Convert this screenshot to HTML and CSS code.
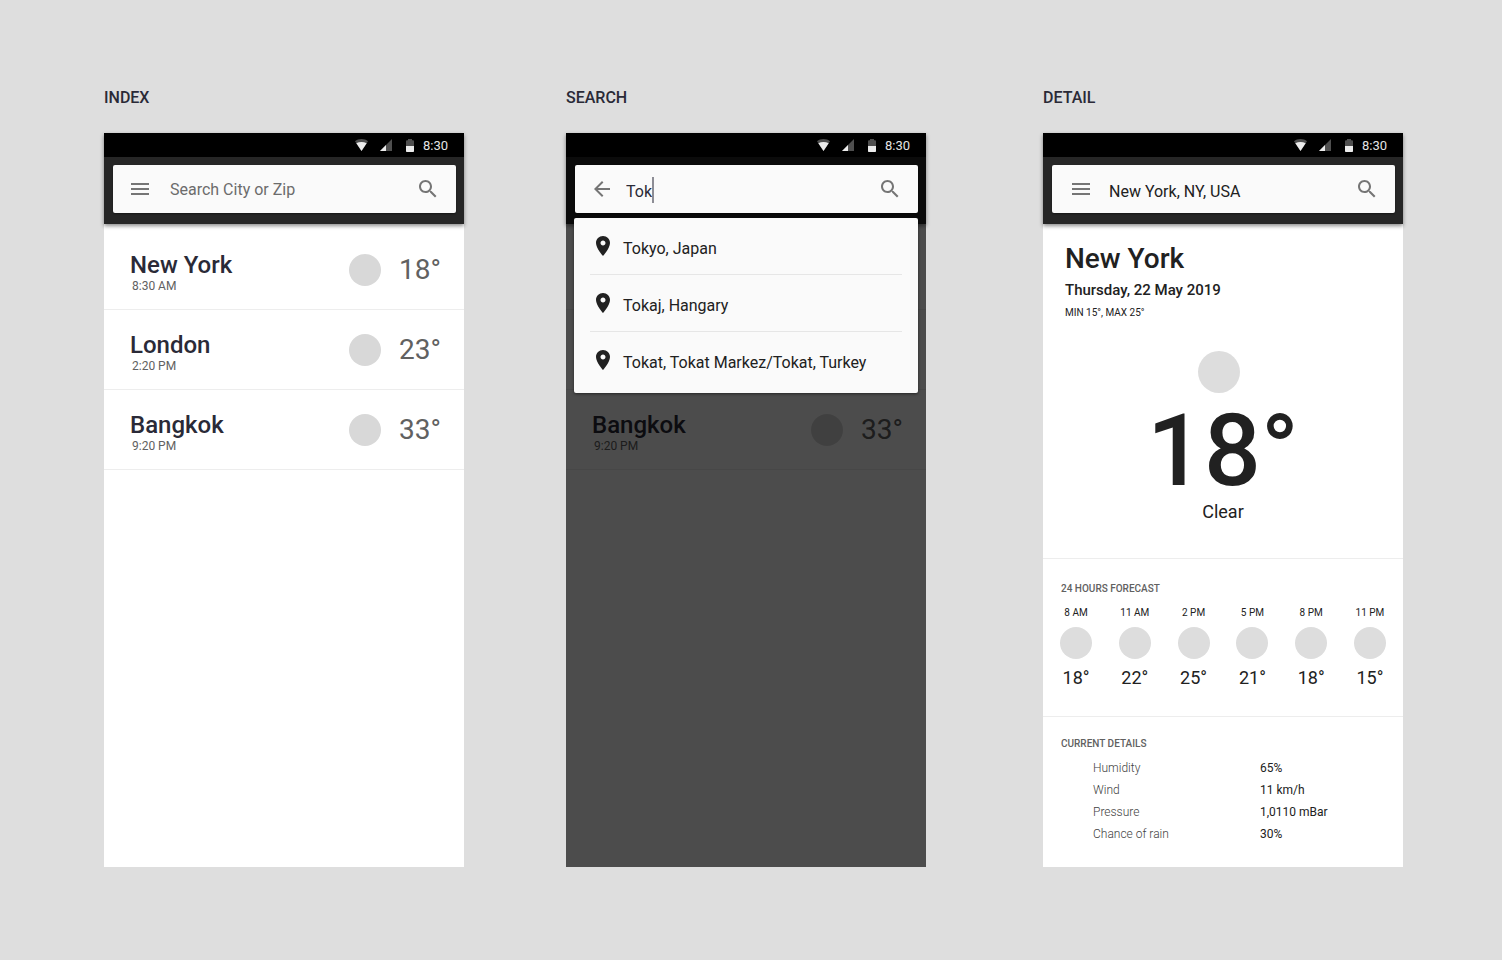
FILE: index.html
```html
<!DOCTYPE html>
<html lang="en">
<head>
<meta charset="utf-8">
<meta name="viewport" content="width=device-width, initial-scale=1">
<title>Weather</title>
<link rel="stylesheet" href="styles.css">
</head>
<body>
<svg class="sprite" width="0" height="0" aria-hidden="true">
  <symbol id="wifi" viewBox="0 0 13 12">
    <path fill="#4f4f4f" d="M6.500 0C4 0 1.700.900 0 2.300L6.500 12 13 2.300C11.300.900 9 0 6.500 0z"/>
    <path fill="#ececec" d="M6.500 3C4.600 3 2.900 3.400 1.300 4.200L6.500 12l5.200-7.800C10.100 3.400 8.400 3 6.500 3z"/>
  </symbol>
  <symbol id="signal" viewBox="0 0 12 12">
    <path fill="#4f4f4f" d="M0 12h12V0z"/>
    <path fill="#ececec" d="M0 12h6V6z"/>
  </symbol>
  <symbol id="battery" viewBox="0 0 8 13">
    <path fill="#4f4f4f" d="M0 7V2.200Q0 1.200 1 1.200h1V0h4v1.200h1q1 0 1 1V7z"/>
    <path fill="#ececec" d="M0 7h8v5.200q0 .8-.8.8H.8q-.8 0-.8-.8z"/>
  </symbol>
  <symbol id="menu" viewBox="0 0 24 24"><path d="M3 18h18v-2H3v2zm0-5h18v-2H3v2zm0-7v2h18V6H3z"/></symbol>
  <symbol id="back" viewBox="0 0 24 24"><path d="M20 11H7.830l5.590-5.590L12 4l-8 8 8 8 1.410-1.410L7.830 13H20v-2z"/></symbol>
  <symbol id="search" viewBox="0 0 24 24"><path d="M15.500 14h-.79l-.28-.27C15.410 12.590 16 11.110 16 9.500 16 5.910 13.090 3 9.500 3S3 5.910 3 9.500 5.910 16 9.500 16c1.610 0 3.090-.59 4.230-1.570l.27.28v.79l5 4.990L20.490 19l-4.990-5zm-6 0C7.010 14 5 11.990 5 9.500S7.010 5 9.500 5 14 7.010 14 9.500 11.990 14 9.500 14z"/></symbol>
  <symbol id="place" viewBox="0 0 24 24"><path d="M12 2C8.130 2 5 5.130 5 9c0 5.250 7 13 7 13s7-7.750 7-13c0-3.870-3.130-7-7-7zm0 9.500c-1.380 0-2.500-1.120-2.500-2.500s1.120-2.500 2.500-2.500 2.500 1.120 2.500 2.500-1.120 2.500-2.500 2.500z"/></symbol>
</svg>

<main class="board">
  <section class="screen">
    <h2 class="screen-title">INDEX</h2>
    <div class="phone">
      <header class="header">
        <div class="status">
          <svg class="wifi"><use href="#wifi"/></svg>
          <svg class="signal"><use href="#signal"/></svg>
          <svg class="battery"><use href="#battery"/></svg>
          <span class="clock">8:30</span>
        </div>
        <div class="appbar">
          <form class="searchbox">
            <button class="icon-button" type="button" aria-label="Menu"><svg class="icon"><use href="#menu"/></svg></button>
            <input class="query query-empty" type="text" placeholder="Search City or Zip" aria-label="Search City or Zip">
            <button class="icon-button" type="button" aria-label="Search"><svg class="icon"><use href="#search"/></svg></button>
          </form>
        </div>
      </header>
      <ul class="cities">
        <li><a class="city" href="#new-york">
          <div class="city-text"><div class="city-name">New York</div><div class="city-time">8:30 AM</div></div>
          <span class="dot"></span><span class="city-temp">18°</span></a></li>
        <li><a class="city" href="#london">
          <div class="city-text"><div class="city-name">London</div><div class="city-time">2:20 PM</div></div>
          <span class="dot"></span><span class="city-temp">23°</span></a></li>
        <li><a class="city" href="#bangkok">
          <div class="city-text"><div class="city-name">Bangkok</div><div class="city-time">9:20 PM</div></div>
          <span class="dot"></span><span class="city-temp">33°</span></a></li>
      </ul>
    </div>
  </section>

  <section class="screen">
    <h2 class="screen-title">SEARCH</h2>
    <div class="phone">
      <header class="header">
        <div class="status">
          <svg class="wifi"><use href="#wifi"/></svg>
          <svg class="signal"><use href="#signal"/></svg>
          <svg class="battery"><use href="#battery"/></svg>
          <span class="clock">8:30</span>
        </div>
        <div class="appbar">
          <form class="searchbox searchbox-active">
            <button class="icon-button" type="button" aria-label="Back"><svg class="icon"><use href="#back"/></svg></button>
            <span class="field">
              <input class="query query-typing" type="text" value="Tok" aria-label="Search city">
              <span class="caret"></span>
            </span>
            <button class="icon-button" type="button" aria-label="Search"><svg class="icon"><use href="#search"/></svg></button>
            <ul class="suggestions">
              <li><button class="suggestion" type="button"><svg class="icon"><use href="#place"/></svg><span>Tokyo, Japan</span></button></li>
              <li><button class="suggestion" type="button"><svg class="icon"><use href="#place"/></svg><span>Tokaj, Hangary</span></button></li>
              <li><button class="suggestion" type="button"><svg class="icon"><use href="#place"/></svg><span>Tokat, Tokat Markez/Tokat, Turkey</span></button></li>
            </ul>
          </form>
        </div>
      </header>
      <ul class="cities">
        <li><a class="city" href="#new-york">
          <div class="city-text"></div></a></li>
        <li><a class="city" href="#london">
          <div class="city-text"></div></a></li>
        <li><a class="city" href="#bangkok">
          <div class="city-text"><div class="city-name">Bangkok</div><div class="city-time">9:20 PM</div></div>
          <span class="dot"></span><span class="city-temp">33°</span></a></li>
      </ul>
      <div class="scrim"></div>
    </div>
  </section>

  <section class="screen screen-detail">
    <h2 class="screen-title">DETAIL</h2>
    <div class="phone">
      <header class="header">
        <div class="status">
          <svg class="wifi"><use href="#wifi"/></svg>
          <svg class="signal"><use href="#signal"/></svg>
          <svg class="battery"><use href="#battery"/></svg>
          <span class="clock">8:30</span>
        </div>
        <div class="appbar">
          <form class="searchbox searchbox-filled">
            <button class="icon-button" type="button" aria-label="Menu"><svg class="icon"><use href="#menu"/></svg></button>
            <input class="query" type="text" value="New York, NY, USA" aria-label="City">
            <button class="icon-button" type="button" aria-label="Search"><svg class="icon"><use href="#search"/></svg></button>
          </form>
        </div>
      </header>
      <section class="today">
        <h1 class="today-city">New York</h1>
        <p class="today-date">Thursday, 22 May 2019</p>
        <p class="today-range">MIN 15°, MAX 25°</p>
        <div class="now">
          <span class="dot dot-large"></span>
          <span class="now-temp">18°</span>
          <span class="now-sky">Clear</span>
        </div>
      </section>
      <section class="forecast">
        <h3 class="label">24 HOURS FORECAST</h3>
        <ol class="hours">
          <li class="hour"><span>8 AM</span><span class="dot dot-light"></span><span class="hour-temp">18°</span></li>
          <li class="hour"><span>11 AM</span><span class="dot dot-light"></span><span class="hour-temp">22°</span></li>
          <li class="hour"><span>2 PM</span><span class="dot dot-light"></span><span class="hour-temp">25°</span></li>
          <li class="hour"><span>5 PM</span><span class="dot dot-light"></span><span class="hour-temp">21°</span></li>
          <li class="hour"><span>8 PM</span><span class="dot dot-light"></span><span class="hour-temp">18°</span></li>
          <li class="hour"><span>11 PM</span><span class="dot dot-light"></span><span class="hour-temp">15°</span></li>
        </ol>
      </section>
      <section class="details">
        <h3 class="label">CURRENT DETAILS</h3>
        <div class="details-body">
          <table class="details-table">
            <tr><th scope="row">Humidity</th><td>65%</td></tr>
            <tr><th scope="row">Wind</th><td>11 km/h</td></tr>
            <tr><th scope="row">Pressure</th><td>1,0110 mBar</td></tr>
            <tr><th scope="row">Chance of rain</th><td>30%</td></tr>
          </table>
        </div>
      </section>
    </div>
  </section>
</main>
</body>
</html>
```

FILE: styles.css
```css
* { box-sizing: border-box; }
body {
  margin: 0;
  background: #dedede;
  color: #212121;
  font-family: Roboto, "Liberation Sans", sans-serif;
}
h1, h2, h3, p, ul, ol { margin: 0; padding: 0; }
ul, ol { list-style: none; }
button { border: 0; padding: 0; background: none; font: inherit; color: inherit; }
svg { display: block; flex: none; }
.sprite { position: absolute; }

.board {
  display: flex;
  gap: 102px;
  min-height: 100vh;
  padding: 88px 99px 93px 104px;
}
.screen { flex: 1 1 0; min-width: 0; display: flex; flex-direction: column; }
.screen-detail { margin-left: 15px; }
.screen-title {
  margin-bottom: 25px;
  font-size: 16px;
  line-height: 20px;
  font-weight: 500;
  color: #2a2a37;
}
.phone { position: relative; flex: 1; background: #fff; }

.header { position: relative; background: #262626; box-shadow: 0 2px 4px rgba(0, 0, 0, .45); }
.status {
  display: flex;
  align-items: center;
  height: 24px;
  padding-right: 16px;
  justify-content: flex-end;
  background: #000;
}
.wifi { width: 13px; height: 12px; margin-right: 12px; }
.signal { width: 12px; height: 12px; margin-right: 14px; }
.battery { width: 8px; height: 13px; margin-right: 9px; }
.clock { padding-top: 1px; font-size: 13px; line-height: 16px; color: #e4e4e4; }
.appbar { padding: 8px 8px 11px 9px; }
.searchbox {
  position: relative;
  display: flex;
  align-items: center;
  height: 48px;
  padding: 0 16px 0 15px;
  background: #fafafa;
  border-radius: 2px;
  box-shadow: 0 1px 2px rgba(0, 0, 0, .4);
}
.searchbox-active { z-index: 2; }
.searchbox-filled { padding-left: 17px; }
.icon { width: 24px; height: 24px; fill: currentColor; }
.icon-button { flex: none; color: #757575; }
.query {
  flex: 1;
  min-width: 0;
  margin-left: 16px;
  padding: 6px 0 0;
  border: 0;
  outline: 0;
  background: none;
  font: inherit;
  font-size: 16px;
  line-height: 24px;
  color: #212121;
}
.query-empty { margin-left: 18px; padding: 2px 0 0; }
.query::placeholder { color: #6c6c6c; opacity: 1; }
.field { flex: 1; display: flex; align-items: center; margin-left: 12px; }
.query-typing { flex: none; width: 26px; margin: 0; color: #2a2a37; }
.caret { width: 2px; height: 26px; margin-top: 2px; background: #8d8d95; }

.suggestions {
  position: absolute;
  top: 53px;
  left: -1px;
  right: 0;
  padding: 0 16px 5px;
  background: #fafafa;
  border-radius: 2px;
  box-shadow: 0 1px 3px rgba(0, 0, 0, .5);
}
.suggestions li + li { border-top: 1px solid #e6e6e6; }
.suggestion {
  display: flex;
  gap: 8px;
  width: 100%;
  padding: 16px 0 16px 1px;
  font-size: 16px;
  line-height: 18px;
  text-align: left;
}
.suggestion span { padding-top: 6px; }
.scrim { position: absolute; z-index: 1; inset: 24px 0 0; background: rgba(0, 0, 0, .7); }

.cities { padding-top: 6px; }
.city {
  display: flex;
  align-items: center;
  min-height: 80px;
  padding: 16px 23px 16px 26px;
  border-bottom: 1px solid #ededed;
  color: inherit;
  text-decoration: none;
}
.city-text { flex: 1; padding-top: 5px; }
.city-name { font-size: 24px; line-height: 28px; font-weight: 500; color: #2a2a37; }
.city-time { padding-left: 2px; font-size: 12px; line-height: 14px; color: #616161; }
.city-temp { margin-left: 18px; font-size: 28px; line-height: 32px; color: #616161; }
.dot { flex: none; width: 32px; height: 32px; border-radius: 50%; background: #d8d8d8; }
.dot-light { background: #ddd; }

.today { padding: 19px 22px 35px; border-bottom: 1px solid #ededed; }
.today-city { font-size: 28px; line-height: 32px; font-weight: 500; }
.today-date { margin-top: 5px; font-size: 15px; line-height: 20px; font-weight: 500; }
.today-range { margin-top: 6px; font-size: 10px; line-height: 14px; }
.now { display: flex; flex-direction: column; align-items: center; margin-top: 31px; }
.dot-large { width: 42px; height: 42px; margin: 0 8px 8px 0; background: #ddd; }
.now-temp { font-size: 100px; line-height: 100px; font-weight: 500; }
.now-sky { font-size: 18px; line-height: 22px; }

.forecast { padding: 23px 17px 28px; border-bottom: 1px solid #ededed; }
.label { padding-left: 1px; font-size: 10px; line-height: 14px; font-weight: 500; color: #616161; }
.hours { display: flex; justify-content: space-between; margin-top: 10px; }
.hour {
  display: flex;
  flex-direction: column;
  align-items: center;
  width: 32px;
  font-size: 10px;
  line-height: 14px;
}
.hour .dot { margin: 7px 0 9px; }
.hour-temp { font-size: 18px; line-height: 20px; }

.details { padding: 20px 17px 20px; }
.details-body { padding: 6px 0 0 33px; }
.details-table { width: 100%; border-collapse: collapse; font-size: 12px; line-height: 22px; text-align: left; }
.details-table th { width: 57%; padding: 0; font-weight: 300; color: #424242; }
.details-table td { padding: 0; }
```
